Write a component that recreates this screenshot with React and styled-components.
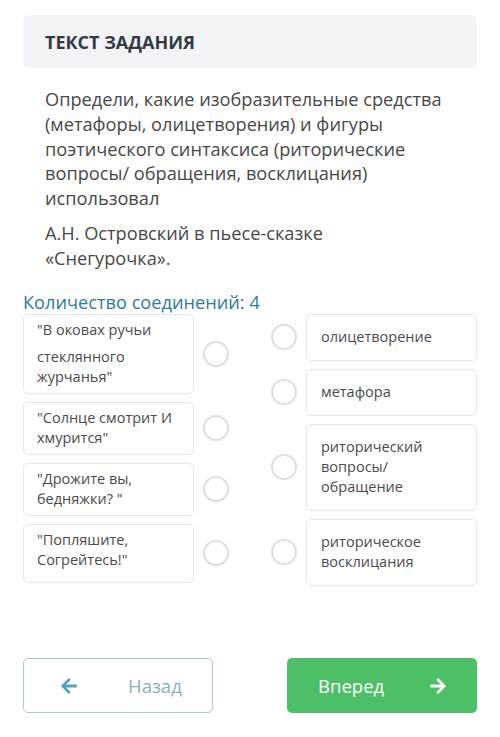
import React from 'react';
import styled, { createGlobalStyle } from 'styled-components';
import { FaArrowLeft, FaArrowRight } from 'react-icons/fa';

const GlobalStyle = createGlobalStyle`
  body {
    margin: 0;
    background: #fff;
    font-family: "Open Sans", "Liberation Sans", sans-serif;
  }
`;

const leftItems = [
  { lines: ['"В оковах ручьи', 'стеклянного', 'журчанья"'], split: true },
  { lines: ['"Солнце смотрит И', 'хмурится"'] },
  { lines: ['"Дрожите вы,', 'бедняжки? "'] },
  { lines: ['"Попляшите,', 'Согрейтесь!"'], tall: true },
];

const rightItems = [
  ['олицетворение'],
  ['метафора'],
  ['риторический', 'вопросы/', 'обращение'],
  ['риторическое', 'восклицания'],
];

class App extends React.Component {
  render() {
    return (
      <Page>
        <GlobalStyle />
        <TaskHeader>ТЕКСТ ЗАДАНИЯ</TaskHeader>
        <TaskText>
          <p>
            Определи, какие изобразительные средства (метафоры, олицетворения) и фигуры
            поэтического синтаксиса (риторические вопросы/ обращения, восклицания)
            использовал
          </p>
          <p>А.Н. Островский в пьесе-сказке «Снегурочка».</p>
        </TaskText>
        <Count>Количество соединений: 4</Count>
        <Matching>
          <Column>
            {leftItems.map((item, i) => (
              <Item key={i}>
                <Card tall={item.tall} compact>
                  {item.lines.map((line, j) => (
                    <Line key={j} gap={item.split && j === 0}>
                      {line}
                    </Line>
                  ))}
                </Card>
                <Dot />
              </Item>
            ))}
          </Column>
          <Column>
            {rightItems.map((lines, i) => (
              <Item key={i}>
                <Dot />
                <Card>
                  {lines.map((line, j) => (
                    <Line key={j}>{line}</Line>
                  ))}
                </Card>
              </Item>
            ))}
          </Column>
        </Matching>
        <Footer>
          <BackButton>
            <FaArrowLeft />
            <span>Назад</span>
          </BackButton>
          <NextButton>
            <span>Вперед</span>
            <FaArrowRight />
          </NextButton>
        </Footer>
      </Page>
    );
  }
}

const Page = styled.div`
  width: 500px;
  height: 737px;
  box-sizing: border-box;
  padding: 15px 23px 0;
  display: flex;
  flex-direction: column;
`;

const TaskHeader = styled.div`
  background: #f3f4f8;
  border-radius: 6px;
  height: 53px;
  display: flex;
  align-items: center;
  padding: 0 22px;
  font-size: 18px;
  font-weight: 700;
  color: #343a42;
`;

const TaskText = styled.div`
  padding: 19px 30px 0 22px;
  color: #474747;
  font-size: 18.2px;
  line-height: 24.8px;
  p {
    margin: 0 0 10px;
  }
`;

const Count = styled.div`
  margin-top: 10px;
  color: #2c7d98;
  font-size: 18.2px;
  line-height: 22px;
`;

const Matching = styled.div`
  margin-top: 1px;
  display: flex;
  justify-content: space-between;
`;

const Column = styled.div`
  display: flex;
  flex-direction: column;
  gap: 8px;
`;

const Item = styled.div`
  display: flex;
  align-items: center;
  gap: 9px;
`;

const Card = styled.div`
  width: 171px;
  box-sizing: border-box;
  min-height: ${(p) => (p.tall ? '59px' : '0')};
  padding: ${(p) => (p.compact ? '5.5px 13px' : '12.5px 14px')};
  border: 1px solid #e6e6e6;
  border-radius: 5px;
  background: #fff;
  color: #4a4a4a;
  font-size: 14.5px;
  line-height: 20px;
`;

const Line = styled.div`
  margin-bottom: ${(p) => (p.gap ? '7px' : '0')};
`;

const Dot = styled.span`
  flex: none;
  width: 26px;
  height: 26px;
  box-sizing: border-box;
  border: 2px solid #dedede;
  border-radius: 50%;
`;

const Footer = styled.div`
  margin-top: auto;
  margin-bottom: 24px;
  display: flex;
  justify-content: space-between;
`;

const ButtonBase = styled.div`
  width: 190px;
  height: 55px;
  box-sizing: border-box;
  border-radius: 5px;
  display: flex;
  align-items: center;
  font-size: 18.5px;
  svg {
    width: 18px;
    height: 18px;
  }
`;

const BackButton = styled(ButtonBase)`
  border: 1px solid #a9c9ce;
  color: #86b3ba;
  padding-left: 36px;
  gap: 50px;
  svg {
    color: #4ba4b4;
  }
`;

const NextButton = styled(ButtonBase)`
  background: #4dbf66;
  color: #fff;
  padding-left: 31px;
  gap: 45px;
`;

export default App;
